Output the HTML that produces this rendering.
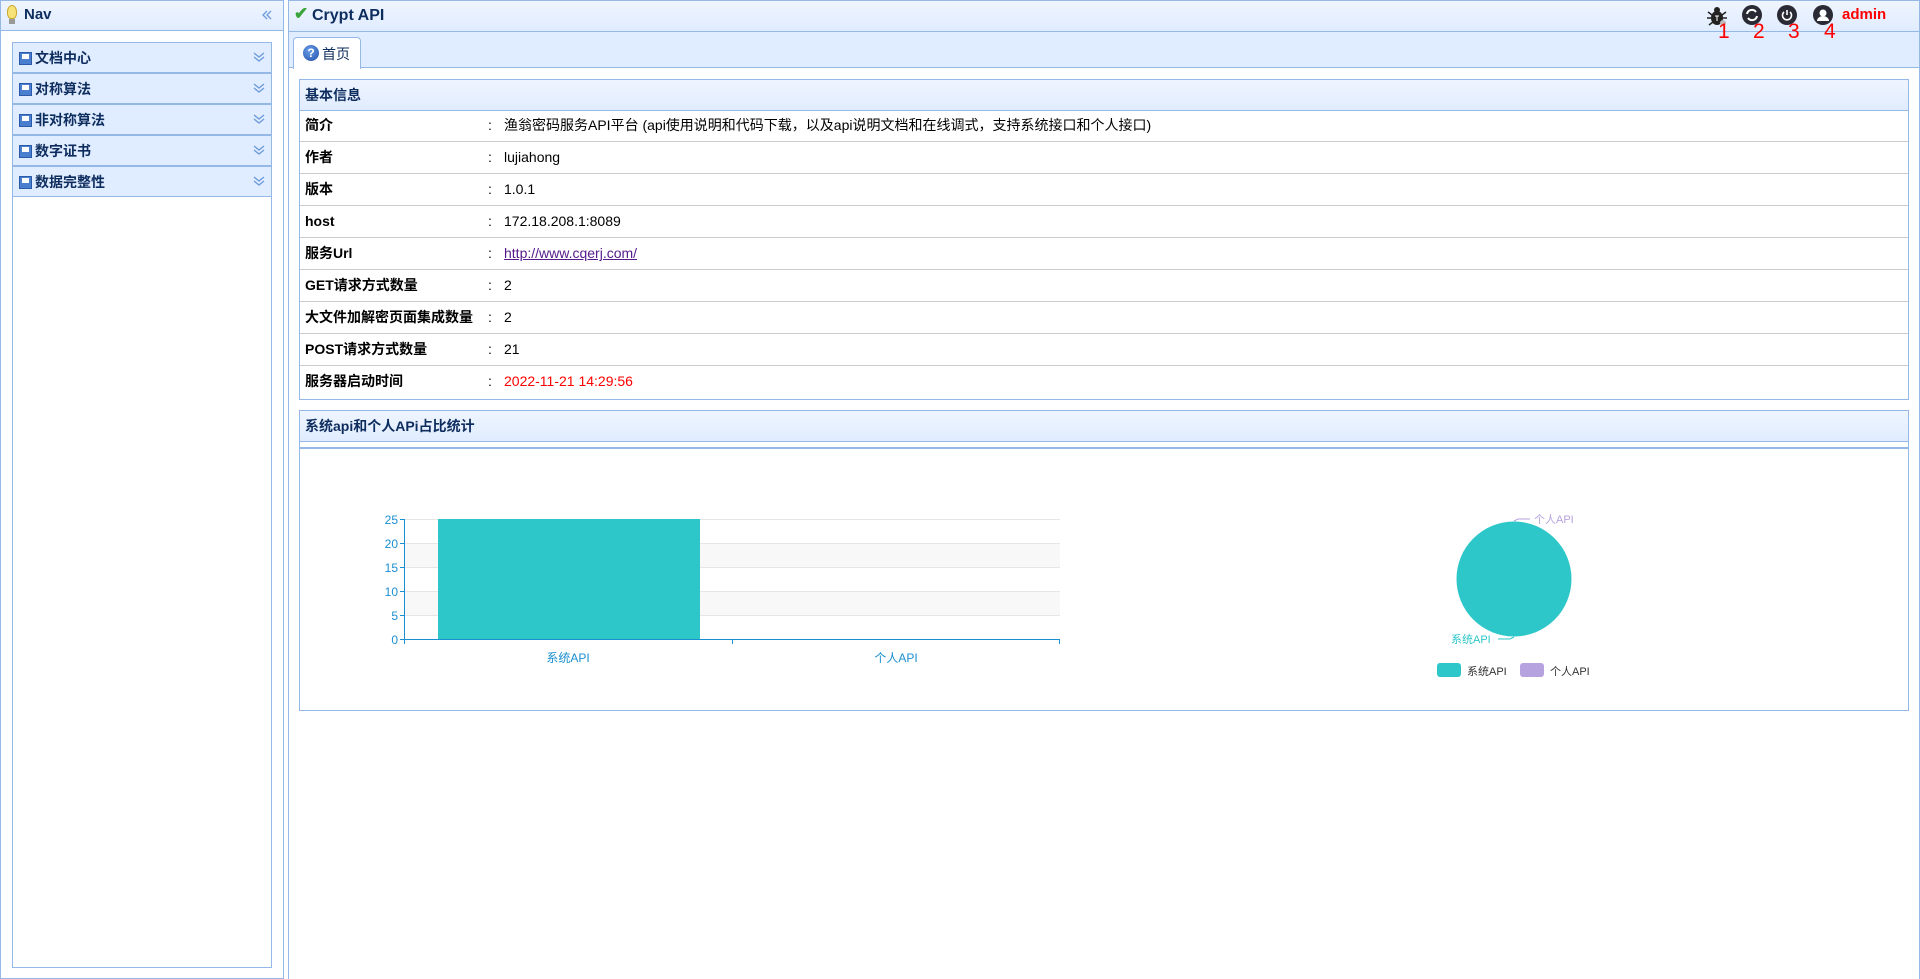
<!DOCTYPE html>
<html><head><meta charset="utf-8"><style>
*{box-sizing:border-box;margin:0;padding:0}
body{width:1920px;height:979px;background:#fff;font-family:"Liberation Sans","Noto Sans CJK SC",sans-serif;font-size:14px;color:#000;position:relative;overflow:hidden}
.abs{position:absolute}
.hdr{background:linear-gradient(#eff5ff,#e0ecff);border:1px solid #95b8e7}
.title{font-weight:bold;color:#0e2d5f;font-size:15px}
.nav-item{position:absolute;left:12px;width:260px;height:31px;background:#e0ecff;border:1px solid #95b8e7;border-top:none}
.nav-item span{position:absolute;left:22px;top:0;line-height:30px;font-weight:bold;color:#0e2d5f;font-size:14px}
.disk{position:absolute;left:6px;top:9px;width:13px;height:13px;background:#4a7fd0;border:1px solid #2a5aa8}
.disk:after{content:"";position:absolute;left:2px;top:1px;width:7px;height:5px;background:#fff}
.chev{position:absolute;right:6px;top:8px}
.row{position:absolute;left:0;width:100%;height:32px;border-bottom:1px solid #ccc;font-size:14px;line-height:31px}
.row .k{position:absolute;left:5px;top:0;font-weight:bold}
.row .c{position:absolute;left:188px;top:0}
.row .v{position:absolute;left:204px;top:0}
.ic{position:absolute;top:5px;width:20px;height:20px;border-radius:50%;background:#2a2a35}
.num{position:absolute;top:20px;color:#f00;font-size:21px}
.ax{font-size:12px;fill:#1a8fd0;font-family:"Liberation Sans","Noto Sans CJK SC",sans-serif}
</style></head><body>
<!-- Nav panel -->
<div class="abs hdr" style="left:0;top:0;width:284px;height:31px"></div>
<div class="abs" style="left:7px;top:5px;width:10px;height:14px;border-radius:50% 50% 40% 40%;background:#f7e27a;border:1px solid #c9a82e"></div>
<div class="abs" style="left:9px;top:19px;width:6px;height:5px;background:#999"></div>
<div class="abs title" style="left:24px;top:0;line-height:30px">Nav</div>
<svg class="abs" style="left:261px;top:10px" width="12" height="10"><path d="M6 1L2 5l4 4M10 1L6 5l4 4" stroke="#6c9bd8" stroke-width="1.3" fill="none"/></svg>
<div class="abs" style="left:0;top:31px;width:284px;height:948px;border:1px solid #95b8e7;border-top:none"></div>
<div class="abs" style="left:12px;top:42px;width:260px;height:926px;border:1px solid #95b8e7"></div>
<div class="nav-item" style="top:42px;border-top:1px solid #95b8e7"><i class="disk"></i><span>文档中心</span><svg class="chev" width="12" height="12"><path d="M1 2l5 4 5-4M1 6l5 4 5-4" stroke="#6c9bd8" stroke-width="1.3" fill="none"/></svg></div>
<div class="nav-item" style="top:73px;border-top:1px solid #95b8e7"><i class="disk"></i><span>对称算法</span><svg class="chev" width="12" height="12"><path d="M1 2l5 4 5-4M1 6l5 4 5-4" stroke="#6c9bd8" stroke-width="1.3" fill="none"/></svg></div>
<div class="nav-item" style="top:104px;border-top:1px solid #95b8e7"><i class="disk"></i><span>非对称算法</span><svg class="chev" width="12" height="12"><path d="M1 2l5 4 5-4M1 6l5 4 5-4" stroke="#6c9bd8" stroke-width="1.3" fill="none"/></svg></div>
<div class="nav-item" style="top:135px;border-top:1px solid #95b8e7"><i class="disk"></i><span>数字证书</span><svg class="chev" width="12" height="12"><path d="M1 2l5 4 5-4M1 6l5 4 5-4" stroke="#6c9bd8" stroke-width="1.3" fill="none"/></svg></div>
<div class="nav-item" style="top:166px;border-top:1px solid #95b8e7"><i class="disk"></i><span>数据完整性</span><svg class="chev" width="12" height="12"><path d="M1 2l5 4 5-4M1 6l5 4 5-4" stroke="#6c9bd8" stroke-width="1.3" fill="none"/></svg></div>

<!-- Main panel -->
<div class="abs hdr" style="left:288px;top:0;width:1632px;height:32px"></div>
<div class="abs" style="left:294px;top:4px;color:#3aa43a;font-size:17px;font-weight:bold">✔</div>
<div class="abs title" style="left:312px;top:0;line-height:31px;font-size:16px">Crypt API</div>
<div class="abs" style="left:288px;top:32px;width:1632px;height:947px;border-left:1px solid #95b8e7;border-right:1px solid #95b8e7"></div>
<div class="abs" style="left:289px;top:32px;width:1630px;height:36px;background:#e0ecff;border-bottom:1px solid #95b8e7"></div>
<div class="abs" style="left:293px;top:37px;width:68px;height:32px;background:#fff;border:1px solid #95b8e7;border-bottom:none;border-radius:4px 4px 0 0"></div>
<div class="abs" style="left:303px;top:45px;width:16px;height:16px;border-radius:50%;background:radial-gradient(circle at 40% 35%,#6a9ee8,#1f4ea8);color:#fff;font-size:12px;font-weight:bold;text-align:center;line-height:16px">?</div>
<div class="abs" style="left:322px;top:44px;font-size:14px;color:#0e2d5f">首页</div>

<!-- top right icons -->
<svg class="abs" style="left:1705px;top:4px" width="24" height="24"><g stroke="#222" stroke-width="1.5"><path d="M3 8l4 3M21 8l-4 3M2 14h4M22 14h-4M4 21l4-3M20 21l-4-3"/></g><ellipse cx="12" cy="14" rx="6" ry="7" fill="#222"/><circle cx="12" cy="6" r="3" fill="#222"/><path d="M10 12h4M12 12v5" stroke="#fff" stroke-width="1"/><circle cx="18" cy="19" r="3" fill="#bbb"/></svg>
<div class="ic" style="left:1742px"><svg width="20" height="20"><path d="M5 9a5 5 0 0 1 9-2M15 11a5 5 0 0 1-9 2" stroke="#fff" stroke-width="2" fill="none"/></svg></div>
<div class="ic" style="left:1777px"><svg width="20" height="20"><path d="M7 7a4.5 4.5 0 1 0 6 0M10 5v5" stroke="#fff" stroke-width="1.6" fill="none"/></svg></div>
<div class="ic" style="left:1813px"><svg width="20" height="20"><circle cx="10" cy="8" r="3.5" fill="#fff"/><path d="M4 16a6 5 0 0 1 12 0z" fill="#fff"/></svg></div>
<div class="abs" style="left:1842px;top:6px;color:#f00;font-weight:bold;font-size:15px">admin</div>
<div class="num" style="left:1718px">1</div>
<div class="num" style="left:1753px">2</div>
<div class="num" style="left:1788px">3</div>
<div class="num" style="left:1824px">4</div>

<!-- info panel -->
<div class="abs hdr" style="left:299px;top:79px;width:1610px;height:32px"></div>
<div class="abs title" style="left:305px;top:0;line-height:32px;top:79px;font-size:14px;color:#0e2d5f">基本信息</div>
<div class="abs" style="left:299px;top:110px;width:1610px;height:290px;border:1px solid #95b8e7;border-top:none">
<div class="row" style="top:0"><span class="k">简介</span><span class="c">:</span><span class="v">渔翁密码服务API平台 (api使用说明和代码下载，以及api说明文档和在线调式，支持系统接口和个人接口)</span></div>
<div class="row" style="top:32px"><span class="k">作者</span><span class="c">:</span><span class="v">lujiahong</span></div>
<div class="row" style="top:64px"><span class="k">版本</span><span class="c">:</span><span class="v">1.0.1</span></div>
<div class="row" style="top:96px"><span class="k">host</span><span class="c">:</span><span class="v">172.18.208.1:8089</span></div>
<div class="row" style="top:128px"><span class="k">服务Url</span><span class="c">:</span><span class="v" style="color:#551a8b;text-decoration:underline">http://www.cqerj.com/</span></div>
<div class="row" style="top:160px"><span class="k">GET请求方式数量</span><span class="c">:</span><span class="v">2</span></div>
<div class="row" style="top:192px"><span class="k">大文件加解密页面集成数量</span><span class="c">:</span><span class="v">2</span></div>
<div class="row" style="top:224px"><span class="k">POST请求方式数量</span><span class="c">:</span><span class="v">21</span></div>
<div class="row" style="top:256px;border-bottom:none"><span class="k">服务器启动时间</span><span class="c">:</span><span class="v" style="color:#f00">2022-11-21 14:29:56</span></div>
</div>

<!-- chart panel -->
<div class="abs hdr" style="left:299px;top:410px;width:1610px;height:32px"></div>
<div class="abs title" style="left:305px;top:410px;line-height:32px;font-size:14px">系统api和个人APi占比统计</div>
<div class="abs" style="left:299px;top:441px;width:1610px;height:270px;border:1px solid #95b8e7;border-top:none"></div>
<div class="abs" style="left:299px;top:447px;width:1610px;height:2px;background:#95b8e7"></div>
<svg class="abs" style="left:0;top:0" width="1920" height="979">
<rect x="405" y="543" width="655" height="24" fill="#f8f8f8"/>
<rect x="405" y="591" width="655" height="24" fill="#f8f8f8"/>
<g stroke="#e6e6e6"><line x1="405" y1="519.5" x2="1060" y2="519.5"/><line x1="405" y1="543.5" x2="1060" y2="543.5"/><line x1="405" y1="567.5" x2="1060" y2="567.5"/><line x1="405" y1="591.5" x2="1060" y2="591.5"/><line x1="405" y1="615.5" x2="1060" y2="615.5"/></g>
<rect x="438" y="519" width="262" height="120" fill="#2ec7c9"/>
<g stroke="#1a8fd0"><line x1="404.5" y1="519" x2="404.5" y2="644"/><line x1="404" y1="639.5" x2="1060" y2="639.5"/><line x1="732.5" y1="639" x2="732.5" y2="644"/><line x1="1059.5" y1="639" x2="1059.5" y2="644"/>
<line x1="400" y1="519.5" x2="404" y2="519.5"/><line x1="400" y1="543.5" x2="404" y2="543.5"/><line x1="400" y1="567.5" x2="404" y2="567.5"/><line x1="400" y1="591.5" x2="404" y2="591.5"/><line x1="400" y1="615.5" x2="404" y2="615.5"/><line x1="400" y1="639.5" x2="404" y2="639.5"/></g>
<g class="ax" text-anchor="end"><text x="398" y="524">25</text><text x="398" y="548">20</text><text x="398" y="572">15</text><text x="398" y="596">10</text><text x="398" y="620">5</text><text x="398" y="644">0</text></g>
<g class="ax" text-anchor="middle"><text x="568" y="662">系统API</text><text x="896" y="662">个人API</text></g>
<circle cx="1514" cy="579" r="57.5" fill="#2ec7c9"/>
<path d="M1514 521 L1518 519 H1530" stroke="#b6a2de" fill="none"/>
<text x="1534" y="523" font-size="11" fill="#b6a2de" font-family="Liberation Sans,Noto Sans CJK SC,sans-serif">个人API</text>
<path d="M1514 637 L1510 639 H1498" stroke="#2ec7c9" fill="none"/>
<text x="1451" y="643" font-size="11" fill="#2ec7c9" font-family="Liberation Sans,Noto Sans CJK SC,sans-serif">系统API</text>
<rect x="1437" y="663" width="24" height="14" rx="3" fill="#2ec7c9"/>
<text x="1467" y="675" font-size="11" fill="#333" font-family="Liberation Sans,Noto Sans CJK SC,sans-serif">系统API</text>
<rect x="1520" y="663" width="24" height="14" rx="3" fill="#b6a2de"/>
<text x="1550" y="675" font-size="11" fill="#333" font-family="Liberation Sans,Noto Sans CJK SC,sans-serif">个人API</text>
</svg>
</body></html>
